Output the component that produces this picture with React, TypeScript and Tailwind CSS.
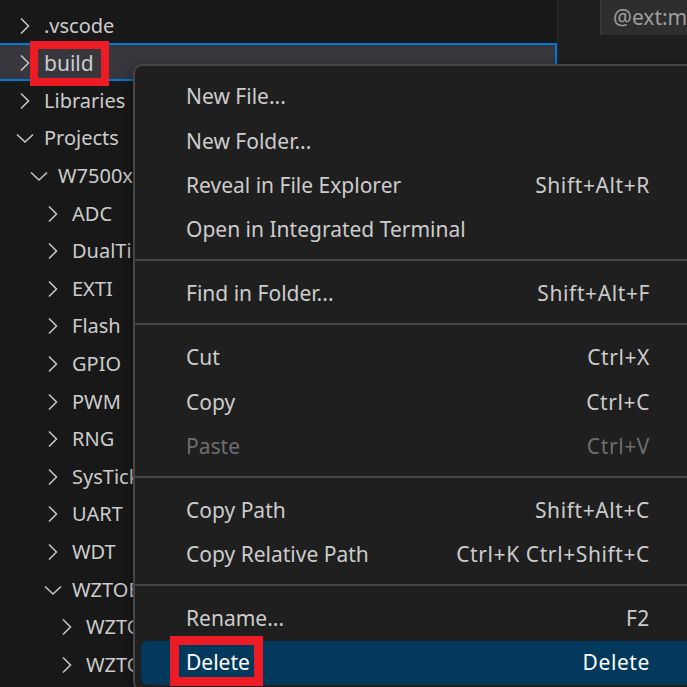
const rows = [
  { label: ".vscode", level: 0, open: false },
  { label: "build", level: 0, open: false, selected: true },
  { label: "Libraries", level: 0, open: false },
  { label: "Projects", level: 0, open: true },
  { label: "W7500x_StdPeriph_Examples", level: 1, open: true },
  { label: "ADC", level: 2, open: false },
  { label: "DualTimer", level: 2, open: false },
  { label: "EXTI", level: 2, open: false },
  { label: "Flash", level: 2, open: false },
  { label: "GPIO", level: 2, open: false },
  { label: "PWM", level: 2, open: false },
  { label: "RNG", level: 2, open: false },
  { label: "SysTick", level: 2, open: false },
  { label: "UART", level: 2, open: false },
  { label: "WDT", level: 2, open: false },
  { label: "WZTOE", level: 2, open: true },
  { label: "WZTOE_DHCP", level: 3, open: false },
  { label: "WZTOE_Loopback", level: 3, open: false },
];

type Item = { label: string; keys?: string; disabled?: boolean; active?: boolean };

// null = separator
const menu: (Item | null)[] = [
  { label: "New File..." },
  { label: "New Folder..." },
  { label: "Reveal in File Explorer", keys: "Shift+Alt+R" },
  { label: "Open in Integrated Terminal" },
  null,
  { label: "Find in Folder...", keys: "Shift+Alt+F" },
  null,
  { label: "Cut", keys: "Ctrl+X" },
  { label: "Copy", keys: "Ctrl+C" },
  { label: "Paste", keys: "Ctrl+V", disabled: true },
  null,
  { label: "Copy Path", keys: "Shift+Alt+C" },
  { label: "Copy Relative Path", keys: "Ctrl+K Ctrl+Shift+C" },
  null,
  { label: "Rename...", keys: "F2" },
  { label: "Delete", keys: "Delete", active: true },
];

const indent = ["pl-0", "pl-[14px]", "pl-[28px]", "pl-[42px]"];

function Chevron({ open }: { open: boolean }) {
  if (open)
    return (
      <svg width="20" height="12" viewBox="0 0 20 12" className="ml-[15px] mt-[3px]">
        <path d="M2 2.5 L10 10 L18 2.5" fill="none" stroke="#c5c5c5" strokeWidth="1.6" />
      </svg>
    );
  return (
    <svg width="12" height="18" viewBox="0 0 12 18" className="ml-[19px] mt-[3px]">
      <path d="M2 1.5 L9.5 9 L2 16.5" fill="none" stroke="#c5c5c5" strokeWidth="1.6" />
    </svg>
  );
}

export default function App() {
  return (
    <div className="relative w-[687px] h-[687px] overflow-hidden flex bg-[#1f1f1f] font-['Noto_Sans','Open_Sans',sans-serif] text-[20px] text-[#cccccc]">
      {/* explorer tree */}
      <div className="w-[558px] shrink-0 bg-[#181818] pt-[5.4px] border-r border-[#2b2b2b]">
        {rows.map((r, i) => (
          <div
            key={i}
            className={`h-[37.6px] flex items-center whitespace-nowrap ${indent[r.level]} ${
              r.selected ? "bg-[#37373d] border-y-2 border-r-2 border-[#0078d4]" : ""
            }`}
          >
            <div className="w-[44px] shrink-0 flex items-center">
              <Chevron open={r.open} />
            </div>
            <span className={`pt-[3px] ${r.selected ? "text-[21px]" : ""}`}>{r.label}</span>
          </div>
        ))}
      </div>

      {/* right side */}
      <div className="flex-1 min-w-0">
        <div className="ml-[42px] h-[35px] bg-[#2e2e2e] border-l border-[#3c3c3c] pl-[12px] flex items-center text-[21px] text-[#9d9d9d] whitespace-nowrap">
          @ext:ms-vscode.cpptools
        </div>
      </div>

      {/* context menu */}
      <div className="absolute left-[133px] top-[64px] w-[580px] bg-[#1f1f1f] border-2 border-[#454545] rounded-[9px] pt-[9px] pb-[4px] text-[21px] shadow-[0_4px_12px_rgba(0,0,0,0.5)]">
        {menu.map((m, i) =>
          m === null ? (
            <div key={i} className="h-[19.7px] pt-[7px]">
              <div className="h-[2px] bg-[#454545]" />
            </div>
          ) : (
            <div
              key={i}
              className={`mx-[6px] h-[44.3px] rounded-[7px] flex items-center justify-between pl-[45px] pr-[55px] whitespace-nowrap ${
                m.active ? "bg-[#04395e] text-white" : m.disabled ? "text-[#6e6e6e]" : "text-[#cccccc]"
              }`}
            >
              <span>{m.label}</span>
              {m.keys && <span className="tracking-[0.6px]">{m.keys}</span>}
            </div>
          )
        )}
      </div>

      {/* annotation boxes */}
      <div className="absolute left-[30px] top-[41px] w-[79px] h-[45px] border-[8px] border-[#ed1c24]" />
      <div className="absolute left-[170px] top-[636px] w-[93px] h-[50px] border-[9px] border-[#ed1c24]" />
    </div>
  );
}
